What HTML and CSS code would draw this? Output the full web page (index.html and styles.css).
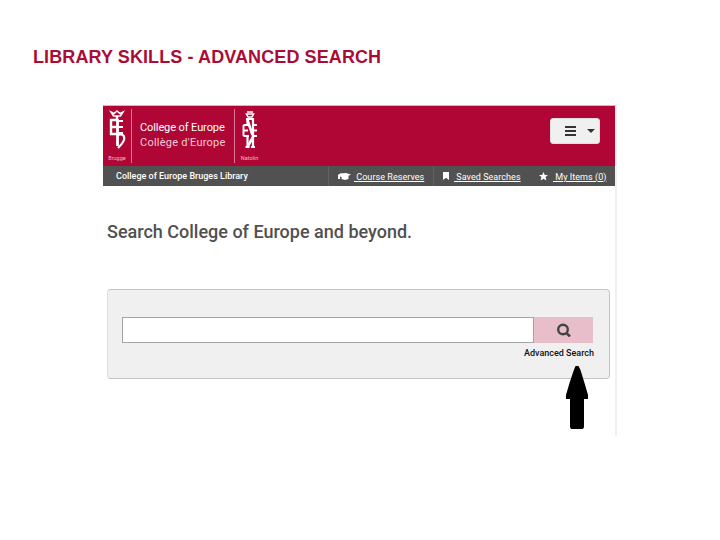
FILE: index.html
```html
<!DOCTYPE html>
<html lang="en">
<head>
    <meta charset="UTF-8">
    <meta name="viewport" content="width=device-width, initial-scale=1.0">
    <title>Library Skills - Advanced Search</title>
    <link rel="stylesheet" href="styles.css">
</head>
<body>
    <h1 class="slide-title">LIBRARY SKILLS - ADVANCED SEARCH</h1>

    <div class="catalog">
        <header class="header">
            <div class="crest">
                <svg class="crest-icon" width="20" height="42" viewBox="0 0 20 42" fill="none" stroke="#fff">
                    <path d="M4 3l3 1.5L10 2l3 2.500L16 3l-2.500 4h-7z" stroke-width="1.500"/>
                    <path d="M10 7v4" stroke-width="2.500"/>
                    <path d="M10 11H4v14h6M4 18h6" stroke-width="2.400"/>
                    <path d="M10 12h6M10 18h6M10 24h6" stroke-width="1.900"/>
                    <path d="M10.500 10v27" stroke-width="2.800"/>
                    <path d="M10 26c6-2 8 1 7 5-1 3-3 5-6 8" stroke-width="2.200"/>
                </svg>
                <span class="crest-name">Brugge</span>
            </div>
            <div class="college-name">College of Europe<br><span class="name-fr">Collège d'Europe</span></div>
            <div class="crest natolin">
                <svg class="crest-icon" width="18" height="42" viewBox="0 0 18 42" fill="none" stroke="#fff">
                    <path d="M6 3h6M5.500 5h7L11 8H7z" stroke-width="1.600"/>
                    <path d="M5 10h8" stroke-width="2"/>
                    <path d="M6.500 10v6M12 10v28M6.500 28v10" stroke-width="2.200"/>
                    <path d="M2.500 16v11M2.500 16H8M2.500 21.500H7M2.500 27H8M11 16h5M11 21.500h5M11 27h5" stroke-width="1.900"/>
                    <path d="M6.500 11l5 15M12 28L7 37" stroke-width="2.600"/>
                    <path d="M4.500 38h4M10 38h4" stroke-width="2"/>
                </svg>
                <span class="crest-name">Natolin</span>
            </div>
            <button class="menu-btn" aria-label="Menu">
                <span class="bars"><i></i><i></i><i></i></span>
                <span class="caret"></span>
            </button>
        </header>

        <nav class="nav">
            <span class="library-name">College of Europe Bruges Library</span>
            <a class="nav-item course" href="#">
                <svg width="13" height="9" viewBox="0 0 13 9" fill="#fff"><path d="M2 1.500L8 1l5 1.500-2.500 1.300V7L7 8 3.500 7V5L2 4.500V7H0V3z"/></svg>
                <span class="nav-text">&nbsp;Course Reserves</span>
            </a>
            <a class="nav-item saved" href="#">
                <svg width="6" height="8" viewBox="0 0 6 8" fill="#fff"><path d="M0 0h6v8L3 5.800 0 8z"/></svg>
                <span class="nav-text">&nbsp;Saved Searches</span>
            </a>
            <a class="nav-item items" href="#">
                <svg width="9" height="9" viewBox="0 0 9 9" fill="#fff"><path d="M4.500 0l1.300 3H9L6.600 5.100 7.400 8.600 4.500 6.800 1.600 8.600l.8-3.500L0 3h3.200z"/></svg>
                <span class="nav-text">&nbsp;My Items (0)</span>
            </a>
        </nav>

        <h2 class="heading">Search College of Europe and beyond.</h2>

        <form class="search-panel">
            <div class="search-row">
                <input class="search-input" type="text" aria-label="Search">
                <button class="search-btn" type="button" aria-label="Search">
                    <svg width="14" height="14" viewBox="0 0 14 14" fill="none" stroke="#444"><circle cx="6" cy="6.500" r="4.800" stroke-width="2.400"/><path d="M9.300 9.800L13 13.500" stroke-width="2.600"/></svg>
                </button>
            </div>
            <a class="advanced-link" href="#">Advanced Search</a>
        </form>

        <svg class="arrow" width="24" height="64" viewBox="0 0 24 64"><path d="M10.500 0h3l2 4 4 13 3.500 12v4h-4v28l-1 2H6l-1-2V33H1v-4L4.500 17 8.500 5z"/></svg>
    </div>
</body>
</html>
```
FILE: styles.css
```css
* {
    margin: 0;
    padding: 0;
    box-sizing: border-box;
}

body {
    background: #fff;
    font-family: Roboto, "Liberation Sans", sans-serif;
    padding: 47px 33px 0;
}

a {
    color: inherit;
    text-decoration: none;
}

.slide-title {
    color: #a90d36;
    font: bold 18px/20px "Liberation Sans", Arial, sans-serif;
    letter-spacing: 0.1px;
    white-space: nowrap;
}

.catalog {
    position: relative;
    width: 514px;
    height: 331px;
    margin: 38px 0 0 70px;
    border-top: 1px solid #e2aebc;
    border-right: 2px solid #f0f0f0;
}

.header {
    display: flex;
    height: 60px;
    background: #af0635;
    color: #fff;
}

.crest {
    display: flex;
    flex-direction: column;
    align-items: center;
    width: 29px;
    height: 54px;
    margin-top: 3px;
    border-right: 1px solid #d87a93;
}

.crest-icon {
    flex: none;
}

.crest-name {
    margin-top: 3px;
    font-size: 5.5px;
    line-height: 8px;
    color: #eebccb;
}

.college-name {
    width: 102px;
    padding: 15px 0 0 8px;
    font-size: 11px;
    line-height: 14.5px;
    letter-spacing: -0.1px;
    white-space: nowrap;
}

.name-fr {
    color: #f3cbd6;
    letter-spacing: 0.25px;
}

.natolin {
    border-right: 0;
    border-left: 1px solid #d87a93;
    width: 30px;
}

.menu-btn {
    display: flex;
    align-items: center;
    width: 50px;
    height: 26px;
    margin: 12px 15px 0 auto;
    padding-left: 14px;
    border: 1px solid #ddd;
    border-radius: 3px;
    background: #f0f0f0;
}

.bars {
    display: grid;
    gap: 2px;
    width: 11px;
}

.bars i {
    height: 2px;
    background: #333;
}

.caret {
    margin-left: 11px;
    border: 4px solid transparent;
    border-top-color: #333;
    border-bottom: 0;
}

.nav {
    display: flex;
    height: 20px;
    padding-left: 13px;
    background: #515151;
    color: #fff;
    font-size: 9px;
    line-height: 20px;
    white-space: nowrap;
}

.library-name {
    width: 212px;
    font-weight: 500;
}

.nav-item {
    display: flex;
    align-items: center;
    border-left: 1px solid #626262;
}

.nav-text {
    padding-top: 1px;
    letter-spacing: 0.05px;
    text-decoration: underline;
}

.course {
    width: 105px;
    padding-left: 9px;
    gap: 3px;
}

.saved {
    width: 97px;
    padding-left: 9px;
    gap: 5px;
}

.items {
    padding-left: 9px;
    gap: 5px;
    border-left: 0;
}

.heading {
    margin: 34px 0 0 4px;
    color: #505050;
    font-size: 18px;
    font-weight: 500;
    line-height: 23px;
    white-space: nowrap;
}

.search-panel {
    display: flex;
    flex-direction: column;
    width: 503px;
    height: 90px;
    margin: 46px 0 0 4px;
    padding: 27px 14px 0;
    border: 1px solid #c4c4c4;
    border-left-color: #ddd;
    border-radius: 4px;
    background: #f0f0f0;
}

.search-row {
    display: flex;
    height: 26px;
}

.search-input {
    width: 412px;
    border: 1px solid #a3a3a3;
    background: #fff;
}

.search-btn {
    display: flex;
    align-items: center;
    justify-content: center;
    width: 59px;
    border: 0;
    background: #e9becb;
}

.advanced-link {
    align-self: flex-end;
    margin: 4px 1px 0 0;
    color: #111;
    font-size: 9px;
    font-weight: 500;
    line-height: 12px;
}

/* pointer laid over the panel, under the advanced link */
.arrow {
    position: absolute;
    left: 462px;
    top: 260px;
}
```
